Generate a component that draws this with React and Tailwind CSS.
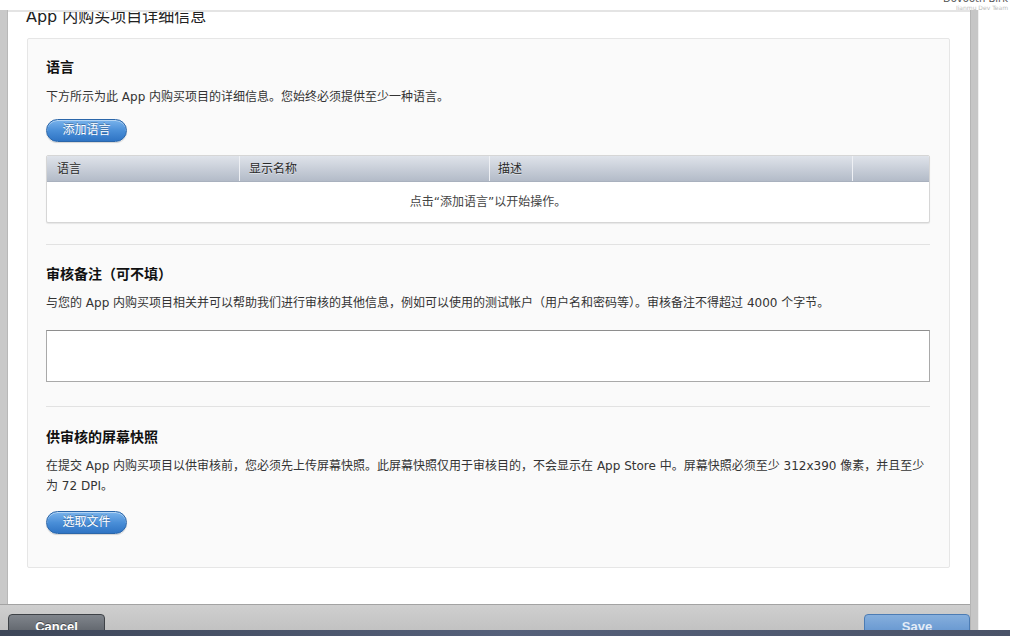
import React from "react";

function BlueButton({ children }) {
  return (
    <button className="h-[23px] w-[81px] rounded-full border border-[#2b66a9] bg-gradient-to-b from-[#79b3ec] via-[#4a8fd8] to-[#2f74c4] text-[12px] leading-[21px] text-white [text-shadow:0_-1px_0_rgba(0,0,0,0.3)] shadow-[inset_0_1px_0_rgba(255,255,255,0.45),0_1px_1px_rgba(0,0,0,0.15)]">
      {children}
    </button>
  );
}

export default function App() {
  const font = "font-['DejaVu_Sans','Noto_Sans_CJK_SC',sans-serif]";
  return (
    <div className={`w-[1010px] h-[636px] overflow-hidden bg-white flex flex-col ${font} text-[#333]`}>
      {/* top strip */}
      <div className="h-[10px] flex justify-end overflow-hidden">
        <div className="-mt-[6px] mr-[2px] flex flex-col items-end leading-none">
          <span className="text-[10px] text-[#555]">Dovooth Birk</span>
          <span className="text-[6px] text-[#bbb] mt-[1px]">Jianmu Dev Team</span>
        </div>
      </div>

      <div className="flex flex-1 min-h-0">
        <div className="flex-1 flex flex-col min-w-0">
          <div className="flex flex-1 min-h-0">
            <div className="w-[8px] bg-[#c9c9c9] border-r border-[#b8b8b8]" />
            <div className="flex-1 min-w-0 bg-white border-t-2 border-[#e4e4e4] overflow-hidden flex flex-col">
              <div className="h-[26px] pl-[18px] overflow-hidden">
                <div className="-mt-[7px] text-[16px] leading-[24px] text-[#222]">App 内购买项目详细信息</div>
              </div>
              <div className="ml-[19px] mr-[20px] bg-[#fafafa] border border-[#e6e6e6] rounded-[2px] pt-[18px] pl-[18px] pr-[19px] pb-[33px]">
                <div className="text-[14px] leading-[20px] font-bold text-[#111]">语言</div>
                <div className="mt-[10px] text-[12px] leading-[20px] text-[#333]">
                  下方所示为此 App 内购买项目的详细信息。您始终必须提供至少一种语言。
                </div>
                <div className="mt-[12px] flex">
                  <BlueButton>添加语言</BlueButton>
                </div>
                <div className="mt-[13px] border border-[#d6d6d6] rounded-[2px] bg-white shadow-[0_1px_1px_rgba(0,0,0,0.08)] overflow-hidden">
                  <div className="flex h-[26px] bg-gradient-to-b from-[#dfe3ea] to-[#b3bbc8] border-b border-[#a9b1be] text-[12px] leading-[26px] text-[#2a2a2a] [text-shadow:0_1px_0_rgba(255,255,255,0.5)]">
                    <div className="w-[193px] pl-[10px] border-r border-[#eef0f4]">语言</div>
                    <div className="w-[250px] pl-[9px] border-r border-[#eef0f4]">显示名称</div>
                    <div className="w-[363px] pl-[8px] border-r border-[#eef0f4]">描述</div>
                    <div className="flex-1" />
                  </div>
                  <div className="h-[40px] flex items-center justify-center text-[12px] text-[#444]">
                    点击“添加语言”以开始操作。
                  </div>
                </div>

                <div className="mt-[21px] border-t border-[#e2e2e2]" />

                <div className="mt-[19px] text-[14px] leading-[20px] font-bold text-[#111]">审核备注（可不填）</div>
                <div className="mt-[9px] text-[12px] leading-[20px] text-[#333]">
                  与您的 App 内购买项目相关并可以帮助我们进行审核的其他信息，例如可以使用的测试帐户（用户名和密码等）。审核备注不得超过 4000 个字节。
                </div>
                <div className="mt-[17px] h-[52px] bg-white border border-[#a9a9a9] border-t-[#8e8e8e]" />

                <div className="mt-[24px] border-t border-[#e2e2e2]" />

                <div className="mt-[20px] text-[14px] leading-[20px] font-bold text-[#111]">供审核的屏幕快照</div>
                <div className="mt-[9px] text-[12px] leading-[20px] text-[#333]">
                  在提交 App 内购买项目以供审核前，您必须先上传屏幕快照。此屏幕快照仅用于审核目的，不会显示在 App Store 中。屏幕快照必须至少 312x390 像素，并且至少
                  <br />
                  为 72 DPI。
                </div>
                <div className="mt-[15px] flex">
                  <BlueButton>选取文件</BlueButton>
                </div>
              </div>
            </div>
          </div>
          {/* bottom bar */}
          <div className="h-[26px] border-t border-[#a3a3a3] bg-gradient-to-b from-[#cfcfcf] to-[#c2c2c2] flex justify-between items-start overflow-hidden">
            <button className="ml-[8px] mt-[9px] w-[97px] h-[26px] rounded-t-[4px] border border-[#3e4247] bg-gradient-to-b from-[#80858c] to-[#555a61] text-[13px] font-bold text-white leading-[22px] font-['Liberation_Sans',sans-serif] [text-shadow:0_-1px_0_rgba(0,0,0,0.4)]">
              Cancel
            </button>
            <button className="mt-[9px] w-[106px] h-[26px] rounded-t-[4px] border border-[#4c7cb4] bg-gradient-to-b from-[#86afdd] to-[#5b8ecb] text-[13px] font-bold text-[#e3ecf7] leading-[22px] font-['Liberation_Sans',sans-serif]">
              Save
            </button>
          </div>
        </div>
        <div className="w-[8px] bg-[#c6c6c6] border-l border-[#b5b5b5]" />
        <div className="w-[32px] bg-white border-l border-[#f0f0f0]" />
      </div>

      {/* desktop strip */}
      <div className="h-[6px] bg-gradient-to-r from-[#3d4658] via-[#55607a] to-[#4a5368]" />
    </div>
  );
}
